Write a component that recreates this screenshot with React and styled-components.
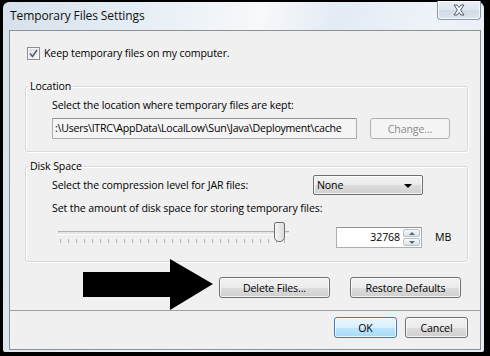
import React from 'react';
import styled, { createGlobalStyle } from 'styled-components';

const GlobalStyle = createGlobalStyle`
  html, body {
    margin: 0;
    padding: 0;
    background: #000;
  }
  body {
    font-family: "Open Sans", "Noto Sans", sans-serif;
    font-size: 10.6px;
    letter-spacing: -0.12px;
    color: #000;
  }
`;

const Screen = styled.div`
  width: 490px;
  height: 356px;
  background: #000;
  padding: 2px 0 0 3px;
  box-sizing: border-box;
  overflow: hidden;
`;

const Window = styled.div`
  width: 481px;
  height: 350px;
  box-sizing: border-box;
  border-radius: 6px 6px 2px 2px;
  background: linear-gradient(100deg, #d6e1ec 0%, #e9f0f6 30%, #f7f9fb 48%, #e3ebf3 62%, #eef3f8 80%, #e6edf4 100%);
  display: flex;
  flex-direction: column;
  padding: 0 3px 2px 6px;
`;

const TitleBar = styled.div`
  height: 28px;
  display: flex;
  justify-content: space-between;
  align-items: flex-start;
`;

const Title = styled.div`
  font-size: 12px;
  letter-spacing: -0.1px;
  line-height: 16px;
  margin: 6px 0 0 1px;
  color: #111;
`;

const CloseButton = styled.div`
  width: 44px;
  height: 19px;
  margin-top: -1px;
  box-sizing: border-box;
  border: 1px solid #8d99a8;
  border-top: none;
  border-radius: 0 0 4px 4px;
  background: linear-gradient(#e9eff5 0%, #dfe7ef 50%, #cfdae5 51%, #dde6ee 100%);
  box-shadow: inset 0 0 0 1px rgba(255, 255, 255, 0.7);
  display: flex;
  align-items: center;
  justify-content: center;
`;

const Client = styled.div`
  flex: 1;
  background: #f0f0f0;
  border: 1px solid #8c9095;
  display: flex;
  flex-direction: column;
`;

const Main = styled.div`
  position: relative;
  display: flex;
  flex-direction: column;
  padding: 15px 12px 12px 15px;
  border-bottom: 1px solid #a0a0a0;
`;

const CheckRow = styled.label`
  display: flex;
  align-items: center;
  gap: 4px;
  margin-left: 2px;
  height: 15px;
  line-height: 15px;
`;

const CheckBox = styled.span`
  width: 13px;
  height: 13px;
  box-sizing: border-box;
  border: 1px solid #8f8f8f;
  background: linear-gradient(135deg, #dcdcdc, #fbfbfb);
  box-shadow: inset 0 0 0 1px #f4f4f4;
  display: flex;
  align-items: center;
  justify-content: center;
`;

const Group = styled.fieldset`
  margin: ${p => p.$top}px 0 0 0;
  padding: ${p => p.$pt}px 10px ${p => p.$pb}px 26px;
  border: 1px solid #d5d9dc;
  border-radius: 3px;
  box-shadow: inset 1px 1px 0 #fff, 1px 1px 0 #fff;
  min-width: 0;
`;

const Legend = styled.legend`
  padding: 0 2px;
  margin-left: -24px;
  line-height: 16px;
`;

const Line = styled.div`
  line-height: 16px;
  margin-top: ${p => p.$mt || 0}px;
`;

const FieldRow = styled.div`
  display: flex;
  align-items: center;
  margin-top: ${p => p.$mt || 0}px;
  height: ${p => p.$h}px;
`;

const PathField = styled.div`
  width: 305px;
  height: 21px;
  box-sizing: border-box;
  border: 1px solid #abadb3;
  border-top-color: #8e9299;
  background: #f4f4f4;
  padding: 0 2px;
  line-height: 19px;
  white-space: nowrap;
  overflow: hidden;
  letter-spacing: -0.25px;
`;

const Button = styled.button`
  width: ${p => p.$w}px;
  height: 21px;
  margin: 0;
  padding: 0;
  box-sizing: border-box;
  font-family: inherit;
  font-size: inherit;
  letter-spacing: inherit;
  border-radius: 3px;
  border: 1px solid ${p => (p.$disabled ? '#adb2b5' : p.$default ? '#3c7fb1' : '#707070')};
  color: ${p => (p.$disabled ? '#8a8a8a' : '#000')};
  background: ${p =>
    p.$disabled
      ? '#f4f4f4'
      : p.$default
      ? 'linear-gradient(#eaf6fd 0%, #d9f0fc 50%, #bee6fd 51%, #a7d9f5 100%)'
      : 'linear-gradient(#f2f2f2 0%, #ebebeb 50%, #dddddd 51%, #cfcfcf 100%)'};
  box-shadow: inset 0 0 0 1px ${p => (p.$disabled ? '#f4f4f4' : 'rgba(255,255,255,0.75)')};
  margin-left: ${p => p.$ml || 0}px;
`;

const Label = styled.span`
  width: ${p => p.$w}px;
  flex: none;
`;

const Combo = styled.div`
  width: 110px;
  height: 20px;
  box-sizing: border-box;
  border: 1px solid #707070;
  border-radius: 2px;
  background: linear-gradient(#f2f2f2 0%, #ebebeb 50%, #dddddd 51%, #cfcfcf 100%);
  box-shadow: inset 0 0 0 1px rgba(255, 255, 255, 0.75);
  display: flex;
  align-items: center;
  justify-content: space-between;
  padding: 0 10px 0 3px;
`;

const ComboArrow = styled.span`
  width: 0;
  height: 0;
  border-left: 4px solid transparent;
  border-right: 4px solid transparent;
  border-top: 4px solid #000;
  margin-top: 2px;
`;

const SliderRow = styled.div`
  display: flex;
  align-items: flex-start;
  margin-top: 3px;
  height: 29px;
`;

const Slider = styled.div`
  position: relative;
  width: 233px;
  height: 26px;
  margin-left: 4px;
`;

const Track = styled.div`
  position: absolute;
  left: 2px;
  right: 0;
  top: 12px;
  height: 2px;
  border-top: 1px solid #b0b0b0;
  border-bottom: 1px solid #fff;
  background: #e4e4e4;
`;

const Ticks = styled.div`
  position: absolute;
  left: 4px;
  top: 20px;
  height: 4px;
  background: repeating-linear-gradient(90deg, #b4b4b4 0 1px, transparent 1px 8px);
`;

const Thumb = styled.div`
  position: absolute;
  top: 3px;
  width: 11px;
  height: 20px;
  box-sizing: border-box;
  border: 1px solid #707070;
  border-radius: 2px 2px 5px 5px;
  background: linear-gradient(90deg, #f5f5f5, #dcdcdc);
`;

const Spinner = styled.div`
  margin-left: 47px;
  margin-top: 8px;
  width: 86px;
  height: 21px;
  box-sizing: border-box;
  border: 1px solid #abadb3;
  border-top-color: #8e9299;
  background: #fff;
  display: flex;
`;

const SpinValue = styled.div`
  flex: 1;
  text-align: right;
  line-height: 19px;
  padding-right: 2px;
`;

const SpinButtons = styled.div`
  width: 17px;
  display: flex;
  flex-direction: column;
  padding: 1px;
  gap: 1px;
`;

const SpinButton = styled.div`
  flex: 1;
  border: 1px solid #b9c1c9;
  border-radius: 2px;
  background: linear-gradient(#f6f8fa, #dde3e9);
  display: flex;
  align-items: center;
  justify-content: center;
`;

const SpinArrow = styled.span`
  width: 0;
  height: 0;
  border-left: 3px solid transparent;
  border-right: 3px solid transparent;
  ${p => (p.$up ? 'border-bottom: 3px solid #5c6670;' : 'border-top: 3px solid #5c6670;')}
`;

const Unit = styled.span`
  margin: 8px 0 0 13px;
  line-height: 21px;
`;

const ActionRow = styled.div`
  display: flex;
  justify-content: flex-end;
  gap: 20px;
  margin: 15px 7px 0 0;
`;

const Arrow = styled.svg`
  position: absolute;
  left: 73px;
  top: 228px;
`;

const Footer = styled.div`
  flex: 1;
  display: flex;
  justify-content: flex-end;
  align-items: flex-start;
  gap: 8px;
  padding: 6px 12px 0 0;
`;

const App = () => {
  const ticks = 28;
  return (
    <>
      <GlobalStyle />
      <Screen>
        <Window>
          <TitleBar>
            <Title>Temporary Files Settings</Title>
            <CloseButton>
              <svg width="14" height="12" viewBox="0 0 14 12">
                <path
                  d="M2 1 L5 1 L7 3.5 L9 1 L12 1 L8.6 6 L12 11 L9 11 L7 8.5 L5 11 L2 11 L5.4 6 Z"
                  fill="#fff"
                  stroke="#4d5866"
                  strokeWidth="1"
                  strokeLinejoin="round"
                />
              </svg>
            </CloseButton>
          </TitleBar>
          <Client>
            <Main>
              <CheckRow>
                <CheckBox>
                  <svg width="9" height="9" viewBox="0 0 9 9">
                    <path d="M1 4.5 L3.5 7.5 L8 1" fill="none" stroke="#4a5f86" strokeWidth="1.6" />
                  </svg>
                </CheckBox>
                Keep temporary files on my computer.
              </CheckRow>

              <Group $top={17} $pt={3} $pb={12}>
                <Legend>Location</Legend>
                <Line>Select the location where temporary files are kept:</Line>
                <FieldRow $mt={5} $h={21}>
                  <PathField>:\Users\ITRC\AppData\LocalLow\Sun\Java\Deployment\cache</PathField>
                  <Button $w={80} $ml={13} $disabled>Change...</Button>
                </FieldRow>
              </Group>

              <Group $top={6} $pt={1} $pb={13}>
                <Legend>Disk Space</Legend>
                <FieldRow $h={20}>
                  <Label $w={261}>Select the compression level for JAR files:</Label>
                  <Combo>
                    <span>None</span>
                    <ComboArrow />
                  </Combo>
                </FieldRow>
                <Line $mt={5}>Set the amount of disk space for storing temporary files:</Line>
                <SliderRow>
                  <Slider>
                    <Track />
                    <Ticks style={{ width: `${ticks * 8 + 1}px` }} />
                    <Thumb style={{ left: '218px' }} />
                  </Slider>
                  <Spinner>
                    <SpinValue>32768</SpinValue>
                    <SpinButtons>
                      <SpinButton><SpinArrow $up /></SpinButton>
                      <SpinButton><SpinArrow /></SpinButton>
                    </SpinButtons>
                  </Spinner>
                  <Unit>MB</Unit>
                </SliderRow>
              </Group>

              <ActionRow>
                <Button $w={111}>Delete Files...</Button>
                <Button $w={111}>Restore Defaults</Button>
              </ActionRow>

              <Arrow width="130" height="52" viewBox="0 0 130 52">
                <polygon points="0,13 87,13 87,0 130,25 87,51 87,38 0,38" fill="#000" />
              </Arrow>
            </Main>
            <Footer>
              <Button $w={63} $default>OK</Button>
              <Button $w={63}>Cancel</Button>
            </Footer>
          </Client>
        </Window>
      </Screen>
    </>
  );
};

export default App;
